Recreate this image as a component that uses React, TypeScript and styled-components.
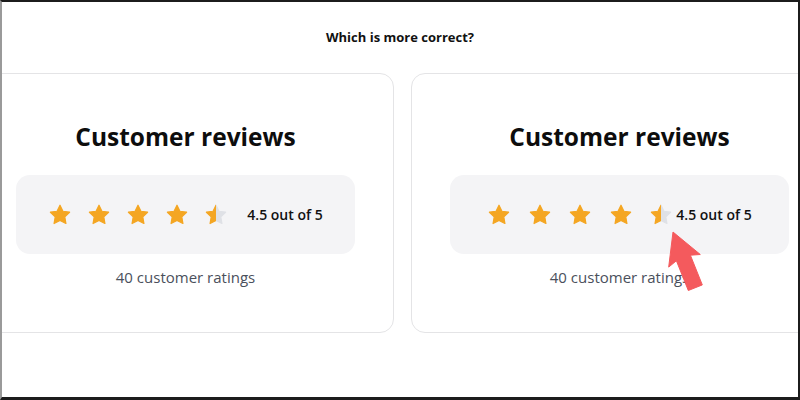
import React from "react";
import styled, { createGlobalStyle } from "styled-components";

const Global = createGlobalStyle`
  html, body { margin: 0; padding: 0; background: #fff; }
  body { font-family: "Open Sans", "Noto Sans", sans-serif; }
`;

const Frame = styled.div`
  width: 800px;
  height: 400px;
  box-sizing: border-box;
  border-top: 2px solid #1c1c1c;
  border-left: 2px solid #9a9a9a;
  border-right: 2px solid #1c1c1c;
  border-bottom: 3px solid #1c1c1c;
  overflow: hidden;
  background: #fff;
  display: flex;
  flex-direction: column;
`;

const Title = styled.h1`
  margin: 26px 0 0;
  font-size: 13px;
  line-height: 18px;
  font-weight: 700;
  color: #111;
  text-align: center;
`;

const CardRow = styled.div`
  margin-top: 27px;
  display: flex;
  justify-content: center;
  gap: 17px;
  padding-left: 5px;
`;

const Card = styled.div`
  position: relative;
  flex: 0 0 417px;
  height: 260px;
  box-sizing: border-box;
  border: 1px solid #e4e4e6;
  border-radius: 14px;
  padding: 47px 38px 0;
  display: flex;
  flex-direction: column;
  align-items: stretch;
`;

const Heading = styled.h2`
  margin: 0;
  font-size: 24.5px;
  line-height: 32px;
  font-weight: 700;
  color: #0d0d0d;
  text-align: center;
`;

const RatingBox = styled.div`
  margin-top: 22px;
  height: 79px;
  background: #f4f4f6;
  border-radius: 14px;
  display: flex;
  align-items: center;
  justify-content: center;
`;

const Stars = styled.div<{ $gap: number }>`
  display: flex;
  align-items: center;
  gap: ${(p) => p.$gap}px;
`;

const Score = styled.span<{ $gap: number }>`
  margin-left: ${(p) => p.$gap}px;
  font-size: 14px;
  font-weight: 600;
  color: #111;
  line-height: 20px;
`;

const Count = styled.p`
  margin: 13px 0 0;
  font-size: 15px;
  line-height: 20px;
  color: #4a505c;
  text-align: center;
`;

const Arrow = styled.svg`
  position: absolute;
  left: 255px;
  top: 155px;
  width: 40px;
  height: 64px;
  overflow: visible;
`;

const STAR =
  "M12 2.2l2.95 6.05 6.65.95-4.8 4.68 1.13 6.62L12 17.38 6.07 20.5 7.2 13.88 2.4 9.2l6.65-.95L12 2.2z";

const Star: React.FC<{ kind: "full" | "half"; id: string }> = ({ kind, id }) => (
  <svg width="24" height="24" viewBox="0 0 24 24">
    {kind === "half" && (
      <defs>
        <linearGradient id={id} x1="0" y1="0" x2="1" y2="0">
          <stop offset="50%" stopColor="#f4a623" />
          <stop offset="50%" stopColor="#dfe1e6" />
        </linearGradient>
      </defs>
    )}
    <path
      d={STAR}
      fill={kind === "half" ? `url(#${id})` : "#f4a623"}
      stroke={kind === "half" ? `url(#${id})` : "#f4a623"}
      strokeWidth="1.2"
      strokeLinejoin="round"
    />
  </svg>
);

const Review: React.FC<{ starGap: number; textGap: number; prefix: string; arrow?: boolean }> = ({
  starGap,
  textGap,
  prefix,
  arrow,
}) => (
  <Card>
    <Heading>Customer reviews</Heading>
    <RatingBox>
      <Stars $gap={starGap}>
        {[0, 1, 2, 3].map((i) => (
          <Star key={i} kind="full" id={`${prefix}-${i}`} />
        ))}
        <Star kind="half" id={`${prefix}-half`} />
      </Stars>
      <Score $gap={textGap}>4.5 out of 5</Score>
    </RatingBox>
    <Count>40 customer ratings</Count>
    {arrow && (
      <Arrow viewBox="0 0 40 64">
        <polygon
          points="6,3 33.3,25.5 23.4,26.2 35.3,55.9 21.3,61.5 9.4,31.8 1.7,38.1"
          fill="#f45a5d"
          stroke="#f45a5d"
          strokeWidth="1"
          strokeLinejoin="round"
        />
      </Arrow>
    )}
  </Card>
);

export default function App() {
  return (
    <>
      <Global />
      <Frame>
        <Title>Which is more correct?</Title>
        <CardRow>
          <Review starGap={15} textGap={19} prefix="a" />
          <Review starGap={16.5} textGap={3} prefix="b" arrow />
        </CardRow>
      </Frame>
    </>
  );
}
